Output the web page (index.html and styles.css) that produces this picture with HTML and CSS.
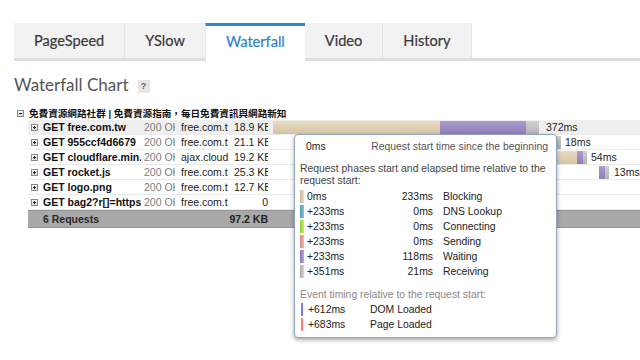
FILE: index.html
```html
<!DOCTYPE html>
<html>
<head>
<meta charset="utf-8">
<link rel="stylesheet" href="styles.css">
</head>
<body>
<div class="tabs">
  <div class="tab">PageSpeed</div>
  <div class="tab">YSlow</div>
  <div class="tab active">Waterfall</div>
  <div class="tab">Video</div>
  <div class="tab">History</div>
</div>
<h1 class="title">Waterfall Chart <span class="help">?</span></h1>
<div class="tree">
  <div class="page-row"><span class="toggle minus"></span><span class="page-name">免費資源網路社群 | 免費資源指南，每日免費資訊與網路新知</span></div>
  <div class="row hover">
    <span class="c-icon"><span class="toggle plus"></span></span>
    <span class="c-name">GET free.com.tw</span><span class="c-status">200 OK</span><span class="c-domain">free.com.tw</span><span class="c-size">18.9 KB</span>
    <div class="c-wf">
      <div class="bar tan" style="left:1px;width:167px"></div>
      <div class="bar purple" style="left:168px;width:86px"></div>
      <div class="bar gray" style="left:254px;width:13px"></div>
      <span class="ms" style="left:274px">372ms</span>
    </div>
  </div>
  <div class="row">
    <span class="c-icon"><span class="toggle plus"></span></span>
    <span class="c-name">GET 955ccf4d6679</span><span class="c-status">200 OK</span><span class="c-domain">free.com.tw</span><span class="c-size">21.1 KB</span>
    <div class="c-wf">
      <div class="bar purple" style="left:276px;width:7px"></div>
      <div class="bar gray" style="left:283px;width:6px"></div>
      <span class="ms" style="left:293px">18ms</span>
    </div>
  </div>
  <div class="row">
    <span class="c-icon"><span class="toggle plus"></span></span>
    <span class="c-name">GET cloudflare.min.js</span><span class="c-status">200 OK</span><span class="c-domain">ajax.cloudflare.com</span><span class="c-size">19.2 KB</span>
    <div class="c-wf">
      <div class="bar tan" style="left:270px;width:35px"></div>
      <div class="bar purple" style="left:305px;width:6px"></div>
      <div class="bar gray" style="left:311px;width:4px"></div>
      <span class="ms" style="left:319px">54ms</span>
    </div>
  </div>
  <div class="row">
    <span class="c-icon"><span class="toggle plus"></span></span>
    <span class="c-name">GET rocket.js</span><span class="c-status">200 OK</span><span class="c-domain">free.com.tw</span><span class="c-size">25.3 KB</span>
    <div class="c-wf">
      <div class="bar purple" style="left:327px;width:6px"></div>
      <div class="bar gray" style="left:333px;width:4px"></div>
      <span class="ms" style="left:342px">13ms</span>
    </div>
  </div>
  <div class="row">
    <span class="c-icon"><span class="toggle plus"></span></span>
    <span class="c-name">GET logo.png</span><span class="c-status">200 OK</span><span class="c-domain">free.com.tw</span><span class="c-size">12.7 KB</span>
    <div class="c-wf"></div>
  </div>
  <div class="row">
    <span class="c-icon"><span class="toggle plus"></span></span>
    <span class="c-name">GET bag2?r[]=https://free.com.tw</span><span class="c-status">200 OK</span><span class="c-domain">free.com.tw</span><span class="c-size">0</span>
    <div class="c-wf"></div>
  </div>
  <div class="row total">
    <span class="c-icon"></span>
    <span class="c-name">6 Requests</span><span class="c-total">97.2 KB</span>
    <div class="c-wf"></div>
  </div>
</div>

<div class="tooltip">
  <div class="tt-start"><span>0ms</span><span>Request start time since the beginning</span></div>
  <p class="tt-note">Request phases start and elapsed time relative to the request start:</p>
  <div class="phases">
    <div class="phase"><span class="sw sw-block"></span><span class="p-start">0ms</span><span class="p-dur">233ms</span><span class="p-name">Blocking</span></div>
    <div class="phase"><span class="sw sw-dns"></span><span class="p-start">+233ms</span><span class="p-dur">0ms</span><span class="p-name">DNS Lookup</span></div>
    <div class="phase"><span class="sw sw-conn"></span><span class="p-start">+233ms</span><span class="p-dur">0ms</span><span class="p-name">Connecting</span></div>
    <div class="phase"><span class="sw sw-send"></span><span class="p-start">+233ms</span><span class="p-dur">0ms</span><span class="p-name">Sending</span></div>
    <div class="phase"><span class="sw sw-wait"></span><span class="p-start">+233ms</span><span class="p-dur">118ms</span><span class="p-name">Waiting</span></div>
    <div class="phase"><span class="sw sw-recv"></span><span class="p-start">+351ms</span><span class="p-dur">21ms</span><span class="p-name">Receiving</span></div>
  </div>
  <p class="tt-event">Event timing relative to the request start:</p>
  <div class="events">
    <div class="event"><span class="ev-line ev-dom"></span><span class="e-time">+612ms</span><span class="e-name">DOM Loaded</span></div>
    <div class="event"><span class="ev-line ev-page"></span><span class="e-time">+683ms</span><span class="e-name">Page Loaded</span></div>
  </div>
</div>
</body>
</html>
```
FILE: styles.css
```css
html, body {
  margin: 0;
  padding: 0;
  background: #fff;
}
body {
  width: 640px;
  height: 360px;
  overflow: hidden;
  position: relative;
  font-family: "Liberation Sans", Arial, sans-serif;
}
.tabs {
  display: flex;
  margin: 23px 0 0 14px;
  border-bottom: 3px solid #dedede;
  height: 35px;
}
.tab {
  font-family: Lato, sans-serif;
  font-size: 14.6px;
  color: #3a3a3a;
  background: #f2f2f2;
  border-right: 1px solid #e4e4e4;
  padding: 0 20px;
  line-height: 35px;
  height: 35px;
  -webkit-text-stroke: 0.2px #3a3a3a;
}
.tab.active {
  background: #fff;
  color: #2f7fd2;
  -webkit-text-stroke: 0.2px #2f7fd2;
  border-top: 3px solid #2f86d8;
  line-height: 32px;
  height: 35px;
  margin-bottom: -3px;
  padding-bottom: 3px;
  border-right: none;
  border-left: 1px solid #e8e8e8;
  margin-left: -1px;
}
.title {
  margin: 11px 0 0 14px;
  font-family: Lato, sans-serif;
  font-weight: normal;
  font-size: 17px;
  color: #555;
  line-height: 26px;
  display: flex;
  align-items: center;
  gap: 9px;
}
.help {
  display: inline-block;
  width: 12px;
  height: 13px;
  background: #e6e6e6;
  color: #666;
  font-family: "Liberation Sans", sans-serif;
  font-weight: bold;
  font-size: 9px;
  line-height: 13px;
  text-align: center;
  margin-top: 2px;
}
.tree {
  margin-top: 8px;
  font-size: 10.5px;
}
.page-row {
  display: flex;
  align-items: center;
  height: 14px;
  padding-left: 17px;
}
.page-name {
  font-family: "Liberation Sans", "Noto Sans CJK TC", sans-serif;
  font-weight: bold;
  font-size: 9.6px;
  color: #111;
  margin-left: 5px;
}
.toggle {
  display: inline-block;
  width: 7px;
  height: 7px;
  border: 1px solid #8a8a8a;
  background: linear-gradient(#fafafa, #d8d8d8);
  position: relative;
  box-sizing: border-box;
}
.toggle::before {
  content: "";
  position: absolute;
  left: 1px;
  top: 2px;
  width: 3px;
  height: 1px;
  background: #222;
}
.toggle.plus::after {
  content: "";
  position: absolute;
  left: 2px;
  top: 1px;
  width: 1px;
  height: 3px;
  background: #222;
}
.row {
  display: flex;
  align-items: center;
  height: 15px;
  margin-left: 28px;
  border-bottom: 1px solid #ebebeb;
  box-sizing: border-box;
  white-space: nowrap;
  color: #222;
}
.row.hover {
  background: #efefef;
}
.row > span {
  overflow: hidden;
  display: block;
  line-height: 14px;
}
.c-icon {
  width: 15px;
  padding-left: 3px;
  box-sizing: border-box;
  display: flex !important;
  align-items: center;
}
.c-name {
  width: 98px;
  margin-right: 3px;
  font-weight: bold;
  color: #111;
}
.c-status {
  width: 31px;
  margin-right: 1px;
  color: #808080;
}
.c-domain {
  width: 47px;
  margin-left: 5px;
}
.c-size {
  width: 34px;
  margin-left: 6px;
  text-align: right;
}
.c-total {
  width: 124px;
  text-align: right;
  font-weight: bold;
  color: #222;
}
.c-wf {
  position: relative;
  flex: 1;
  height: 100%;
  margin-left: 4px;
}
.bar {
  position: absolute;
  top: 1px;
  height: 13px;
}
.tan { background: linear-gradient(#e8dcc6, #d6c3a3); }
.purple { background: linear-gradient(#aa9cd0, #8f7db9); }
.gray { background: linear-gradient(#d2d2d2, #b2b2b2); }
.ms {
  position: absolute;
  top: 0;
  line-height: 14px;
  font-size: 10.5px;
  color: #222;
}
.row.total {
  height: 18px;
  background: #a9a9a9;
  border-top: 1px solid #969696;
  border-bottom: 1px solid #969696;
}
.row.total .c-name {
  color: #2a2a2a;
}
.tooltip {
  position: absolute;
  left: 294px;
  top: 134px;
  width: 263px;
  height: 204px;
  box-sizing: border-box;
  background: #fff;
  border: 1px solid #8ea6bf;
  border-radius: 4px;
  box-shadow: 0 2px 4px rgba(0,0,0,0.35);
  padding: 5px 8px 0 5px;
  font-size: 10.4px;
  color: #222;
}
.tt-start {
  display: flex;
  justify-content: space-between;
  line-height: 14px;
  padding-left: 6px;
}
.tt-start span:last-child { color: #555; }
.tt-note {
  margin: 9px 0 2px;
  line-height: 12px;
  color: #444;
}
.phase, .event {
  display: flex;
  align-items: center;
  height: 15px;
}
.sw {
  width: 4px;
  height: 13px;
  margin-right: 3px;
}
.sw-block { background: linear-gradient(90deg, #cdb895, #e9dfcd); }
.sw-dns { background: linear-gradient(90deg, #4b9db3, #8cc3d2); }
.sw-conn { background: linear-gradient(90deg, #8fcf2a, #c2ea7f); }
.sw-send { background: linear-gradient(90deg, #d9887c, #efbdb5); }
.sw-wait { background: linear-gradient(90deg, #8876b3, #b8acd6); }
.sw-recv { background: linear-gradient(90deg, #a8a8a8, #d6d6d6); }
.p-start { width: 56px; }
.p-dur { width: 70px; text-align: right; }
.p-name { margin-left: 10px; }
.tt-event {
  margin: 10px 0 1px;
  line-height: 12px;
  color: #888;
}
.ev-line {
  width: 2px;
  height: 13px;
  margin: 0 5px 0 1px;
}
.ev-dom { background: #7a7aff; }
.ev-page { background: #ff7a7a; }
.e-time { width: 62px; }
```
